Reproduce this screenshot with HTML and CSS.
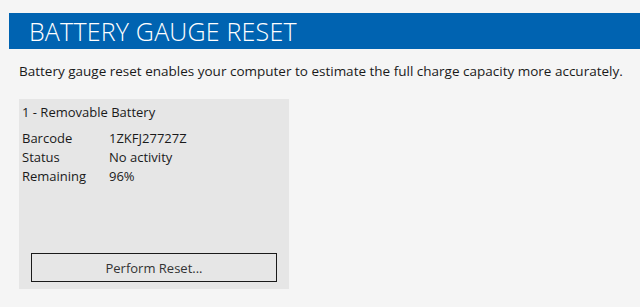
FILE: index.html
```html
<!DOCTYPE html>
<html>
<head>
<meta charset="utf-8">
<link rel="stylesheet" href="styles.css">
</head>
<body>
<div class="page">
  <header class="banner"><h1 class="title">BATTERY GAUGE RESET</h1></header>
  <p class="desc">Battery gauge reset enables your computer to estimate the full charge capacity more accurately.</p>
  <section class="card">
    <div class="card-title">1 - Removable Battery</div>
    <div class="rows">
      <div class="row"><span class="label">Barcode</span><span class="value">1ZKFJ27727Z</span></div>
      <div class="row"><span class="label">Status</span><span class="value">No activity</span></div>
      <div class="row"><span class="label">Remaining</span><span class="value">96%</span></div>
    </div>
    <button class="btn">Perform Reset...</button>
  </section>
</div>
</body>
</html>
```
FILE: styles.css
```css
html, body {
  margin: 0;
  padding: 0;
  background: #f5f5f5;
  overflow: hidden;
}
.page {
  width: 640px;
  height: 307px;
  padding-top: 13px;
  box-sizing: border-box;
  font-family: "Open Sans", "Noto Sans", sans-serif;
  color: #1a1a1a;
}
.banner {
  margin-left: 9px;
  height: 36px;
  background: #0063b1;
  display: flex;
  align-items: center;
  padding-left: 20px;
}
.title {
  margin: 0;
  font-size: 25px;
  font-weight: 300;
  color: #fff;
  line-height: 1;
  letter-spacing: 0.2px;
}
.desc {
  margin: 13px 0 0 19px;
  font-size: 13.5px;
  line-height: 18px;
}
.card {
  margin: 19px 0 0 19px;
  width: 270px;
  height: 190px;
  background: #e6e6e6;
  box-sizing: border-box;
  padding: 4px 12px 7px 3px;
  display: flex;
  flex-direction: column;
  font-size: 13px;
}
.card-title {
  line-height: 18px;
}
.rows {
  margin-top: 8px;
  display: flex;
  flex-direction: column;
}
.row {
  display: flex;
  line-height: 19px;
}
.label {
  width: 87px;
}
.btn {
  margin-top: auto;
  margin-left: 9px;
  height: 29px;
  width: 246px;
  border: 1px solid #1a1a1a;
  background: #e6e6e6;
  font-family: inherit;
  font-size: 13px;
  color: #333;
  padding: 0;
}
```
